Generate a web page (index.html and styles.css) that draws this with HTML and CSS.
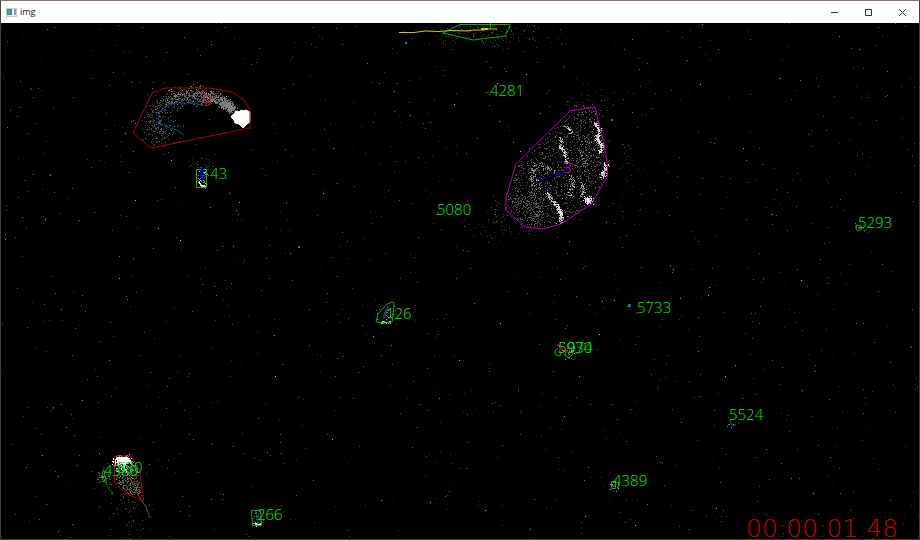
FILE: index.html
```html
<!DOCTYPE html>
<html lang="en">
<head>
<meta charset="utf-8">
<title>img</title>
<link rel="stylesheet" href="styles.css">
</head>
<body>
<div class="window">
  <header class="titlebar">
    <svg class="app-icon" viewBox="0 0 11 9" aria-hidden="true">
      <rect width="11" height="9" fill="#c4cbd0"/>
      <rect x="1" y="1" width="9" height="7" fill="#e9eeee"/>
      <rect x="1" y="1" width="5" height="6" fill="#438b82"/>
      <rect x="2" y="2" width="2" height="4" fill="#5fa477"/>
      <rect x="8" y="1" width="2" height="6" fill="#78a5c0"/>
    </svg>
    <h1 class="title">img</h1>
    <nav class="controls" aria-label="Window">
      <button class="control" aria-label="Minimize"><svg viewBox="0 0 9 9"><path d="M1 4.5h7"/></svg></button>
      <button class="control" aria-label="Maximize"><svg viewBox="0 0 9 9"><path d="M1.5 1.5h6v6h-6z"/></svg></button>
      <button class="control" aria-label="Close"><svg viewBox="0 0 9 9"><path d="M1.2 1.2l6.6 6.6M7.8 1.2l-6.6 6.6"/></svg></button>
    </nav>
  </header>
  <main class="view">
    <svg class="scene" viewBox="1 23 918 516" preserveAspectRatio="xMidYMid meet">
      <g id="speckles"></g>

      <g class="tracks">
        <path class="blob" d="M241 110l-2 2-3-1-2 3-3 3 3 3 1 3 4 1 4 4 4-4 3-2v-10l-4-2-3 1z"/>
        <path class="blue-track" d="M203 105l-11-2-15 0-9 2-8 6-2 7 3 6 9 4 7 2 7 5"/>
        <path class="red" d="M152 93l14-5 44 0 22 4 12 8 6 10v18l-99 20-18-15z"/>
        <path class="green" d="M196.500 169.500h10v18h-10z"/>
        <path class="bright-blue" d="M202.500 167l-1 4v8M204 170l-3 4"/>

        <path class="green" d="M443 33l17-8.500h50l-1 4.500-4 7-32 4z"/>
        <path class="green" d="M490.500 23v6"/>
        <path class="yellow" d="M399 32.500h15l11-1.500 14 .5 12-1 15 .5 8-1h10l4-1h9"/>
        <path class="yellow thick" d="M481 29h7"/>
        <path class="green dim" d="M485 92l3 1 3 2"/>

        <path class="magenta" d="M570 111l25-4 9 37 3.500 21v11l-16 28-30.500 20-18 5-18-2-19-17v-12l10-34z"/>
        <path class="navy-track" d="M534 184l9-5 9-3 10-3"/>
        <path class="navy-track thick" d="M558 174h5M560 172v4"/>

        <path class="green" d="M376 322l2-8 9-10 5-2 2 1-1 12-1 7-7 1z"/>
        <path class="blue-track thick" d="M388 306l-1 4-2 3-1 6"/>
        <path class="green" d="M437 212l2 2M436 214.500h3"/>
        <path class="green" d="M856 225l5 1 1 3-4 2-2-2z"/>
        <path class="magenta thick" d="M858 228h2"/>
        <path class="green" d="M558 348l-3 3 1 4 4 1 1-3-2-3M566 351l-1 5 4 2 3-3 1-5M567 349l3-1"/>
        <path class="red thick" d="M557 345l5 2M559 348l4 1M564 350l4 2M567 347l3 2"/>
        <path class="magenta" d="M558 351l1 2"/>
        <path class="teal" d="M730 419l1 5 3 2 2-2"/>
        <path class="green" d="M611.500 481.500h4v7h-4z"/>
        <path class="magenta thick" d="M612 486h3"/>
        <path class="green" d="M251.500 510.500h9l1 15h-9z"/>
        <path class="teal" d="M255 510l2 6v5M259 513l-2 5"/>

        <path class="red" d="M114.500 456.500l3-.5h14l8 14 4 31-16-7-13-11z"/>
        <path class="olive" d="M129 476l7 15 6 10 4 6 4 11"/>
        <path class="green dim" d="M105 479l2 8 5 5 1 3"/>
        <path class="green" d="M104 469l-2 5 1 8 3-3-2-5 1-3M101 476l5 1"/>
      </g>

      <g class="labels">
        <text class="hot" x="203" y="106">9</text>
        <text x="210" y="179">43</text>
        <text x="490" y="96">4281</text>
        <text class="pink" x="563" y="173">3</text>
        <text x="437" y="215">5080</text>
        <text x="858" y="228">5293</text>
        <text x="386" y="319">126</text>
        <text x="637" y="313">5733</text>
        <text x="558" y="353">5930</text>
        <text x="567" y="353">974</text>
        <text x="729" y="420">5524</text>
        <text x="613" y="486">4389</text>
        <text x="104" y="476">4380</text>
        <text x="117" y="473">530</text>
        <text x="257" y="520">266</text>
      </g>
      <text class="clock" x="746" y="537">00:00:01.48</text>
    </svg>
  </main>
</div>
<script src="scene.js"></script>
</body>
</html>
```
FILE: styles.css
```css
* { box-sizing: border-box; }
body { margin: 0; background: #000; font-family: "Open Sans", "Noto Sans", sans-serif; }
.window { display: flex; flex-direction: column; height: 100vh; border: 1px solid #45403f; border-top-color: #8f706d; }
.titlebar { display: flex; align-items: center; flex: none; height: 22px; padding-left: 5px; background: #fff; color: #111; }
.app-icon { width: 11px; height: 9px; }
.title { margin: 0 0 0 3px; font-size: 9px; line-height: 12px; font-weight: 400; }
.controls { display: flex; margin-left: auto; align-self: stretch; }
.control { display: grid; place-items: center; width: 34px; padding: 0; border: 0; background: none; color: #333; }
.control:hover { background: #e5e5e5; }
.control svg { width: 9px; height: 9px; fill: none; stroke: currentColor; stroke-width: 1; }
.view { flex: 1; min-height: 0; background: #000; }
.scene { display: block; width: 100%; height: 100%; overflow: visible; }
.tracks path { fill: none; stroke-width: 1; }
.tracks .blob { fill: #fff; stroke: #fff; }
.tracks .red { stroke: #b40000; }
.tracks .green { stroke: #00b400; }
.tracks .dim { stroke: #007000; }
.tracks .yellow { stroke: #d2ca00; }
.tracks .magenta { stroke: #b400b4; }
.tracks .blue-track { stroke: #06488a; }
.tracks .bright-blue { stroke: #0000e6; stroke-width: 2; }
.tracks .navy-track { stroke: #000096; }
.tracks .teal { stroke: #00696a; }
.tracks .olive { stroke: #4e6200; }
.tracks .thick { stroke-width: 2; }
.labels { fill: #00f000; stroke: #00f000; stroke-width: 0; font-size: 15px; font-weight: 300; }
.labels .hot { fill: #ff0000; }
.labels .pink { fill: #ff00ff; }
.clock { fill: #cc0000; font-family: "DejaVu Sans Light", "DejaVu Sans", sans-serif; font-size: 25px; font-weight: 200; }
```
FILE: scene.js
```js
// Sensor events are drawn as one-pixel squares, batched into one path per colour.
const layers = {};
let seed = 7;
function random() {
  seed = (seed * 1664525 + 1013904223) >>> 0;
  return seed / 4294967296;
}
function spread() {
  return random() + random() + random() - 1.5;
}
function dot(x, y, color, size = 1) {
  x = Math.round(x);
  y = Math.round(y);
  if (x < 1 || y < 23 || x > 918 || y > 538) return;
  layers[color] = (layers[color] || "") + `M${x} ${y}h${size}v${size}h-${size}z`;
}
function shade(low, high) {
  const v = Math.round((low + random() * (high - low)) / 16) * 16;
  return `rgb(${v},${v},${v})`;
}
function cloud(cx, cy, rx, ry, count, low, high) {
  for (let i = 0; i < count; i++) dot(cx + spread() * rx, cy + spread() * ry, shade(low, high));
}
function trail(points, width, density, low, high) {
  for (let i = 1; i < points.length; i++) {
    const [x0, y0] = points[i - 1], [x1, y1] = points[i];
    const count = Math.hypot(x1 - x0, y1 - y0) * density;
    for (let k = 0; k < count; k++) {
      const t = random();
      dot(x0 + (x1 - x0) * t + spread() * width, y0 + (y1 - y0) * t + spread() * width, shade(low, high));
    }
  }
}
function inside(x, y, shape) {
  let hit = false;
  for (let i = 0, j = shape.length - 1; i < shape.length; j = i++) {
    const [xi, yi] = shape[i], [xj, yj] = shape[j];
    if ((yi > y) !== (yj > y) && x < (xj - xi) * (y - yi) / (yj - yi) + xi) hit = !hit;
  }
  return hit;
}
function fill(shape, count, low, high) {
  const xs = shape.map(p => p[0]), ys = shape.map(p => p[1]);
  const x0 = Math.min(...xs), y0 = Math.min(...ys);
  const w = Math.max(...xs) - x0, h = Math.max(...ys) - y0;
  for (let i = 0; i < count; i++) {
    const x = x0 + random() * w, y = y0 + random() * h;
    if (inside(x, y, shape)) dot(x, y, shade(low, high));
  }
}

// Background noise
for (let i = 0; i < 1050; i++) dot(1 + random() * 917, 23 + random() * 515, shade(45, 115));
for (let i = 0; i < 90; i++) dot(1 + random() * 917, 23 + random() * 515, shade(130, 190));
cloud(485, 32, 70, 14, 170, 35, 90);
cloud(588, 104, 25, 12, 60, 35, 90);
cloud(503, 220, 30, 22, 100, 35, 80);
cloud(620, 170, 25, 50, 40, 35, 80);
cloud(200, 165, 16, 10, 40, 35, 80);
cloud(128, 512, 25, 28, 80, 35, 80);
cloud(104, 477, 9, 8, 40, 50, 140);

// Curved plume behind the bright target
trail([[158, 132], [153, 122], [158, 108], [170, 99]], 11, 5, 45, 110);
trail([[168, 99], [188, 95], [207, 97]], 9, 11, 45, 125);
trail([[204, 95], [218, 98], [228, 105]], 6, 14, 60, 135);
trail([[222, 101], [233, 110]], 5, 24, 90, 145);
cloud(162, 131, 20, 13, 100, 45, 110);

// Rotating target with bright edges
const hull = [[570, 112], [594, 108], [603, 144], [607, 165], [607, 175], [591, 203], [560, 223], [542, 228], [525, 226], [508, 209], [508, 198], [517, 165]];
fill(hull, 1700, 35, 115);
trail([[595, 123], [599, 130], [597, 139], [602, 146], [599, 152]], 2, 6, 150, 255);
trail([[565, 126], [571, 133]], 2, 3, 130, 230);
trail([[561, 138], [560, 147], [564, 151], [567, 163]], 2, 4, 130, 240);
trail([[606, 165], [605, 172], [600, 176]], 3, 6, 140, 255);
trail([[571, 177], [573, 185], [570, 195]], 3, 3, 120, 210);
trail([[582, 183], [583, 191], [580, 196]], 2, 3, 100, 190);
trail([[586, 198], [590, 202]], 3, 16, 170, 255);
trail([[546, 192], [554, 202]], 3, 4, 110, 210);
trail([[554, 202], [560, 211], [561, 222]], 2, 6, 160, 255);
trail([[534, 162], [532, 180], [537, 189]], 5, 3, 60, 190);
trail([[537, 165], [547, 167], [554, 172]], 3, 2, 80, 160);
trail([[588, 140], [584, 150], [586, 166]], 10, 3, 50, 160);
trail([[533, 196], [536, 225]], 9, 5, 45, 115);
trail([[510, 201], [525, 203]], 7, 4, 45, 105);

// Smaller targets
cloud(202, 178, 5, 10, 50, 60, 190);
trail([[199, 181], [201, 186], [205, 186]], 1, 4, 170, 255);
trail([[380, 322], [390, 322]], 1, 4, 150, 255);
cloud(386, 314, 9, 10, 25, 80, 170);
cloud(567, 352, 11, 8, 45, 60, 180);
cloud(860, 226, 9, 6, 18, 50, 130);
cloud(614, 486, 5, 5, 16, 80, 190);
cloud(256, 518, 5, 8, 20, 60, 150);
trail([[254, 523], [257, 525], [261, 523]], 1, 5, 160, 255);
trail([[728, 424], [736, 425]], 2, 1, 60, 150);
cloud(122, 464, 8, 9, 110, 140, 255);
cloud(122, 460, 8, 4, 260, 235, 255);
fill([[115, 460], [132, 457], [138, 470], [141, 497], [128, 493], [116, 482]], 500, 45, 130);

// Blue markers
dot(298, 246, "#008bd0", 2);
dot(405, 42, "#008bd0", 2);
dot(611, 119, "#008bd0", 2);
dot(628, 304, "#007fac", 3);
dot(636, 312, "#2424a8", 2);

const group = document.getElementById("speckles");
for (const [color, d] of Object.entries(layers)) {
  const path = document.createElementNS("http://www.w3.org/2000/svg", "path");
  path.setAttribute("d", d);
  path.setAttribute("fill", color);
  group.append(path);
}
```
